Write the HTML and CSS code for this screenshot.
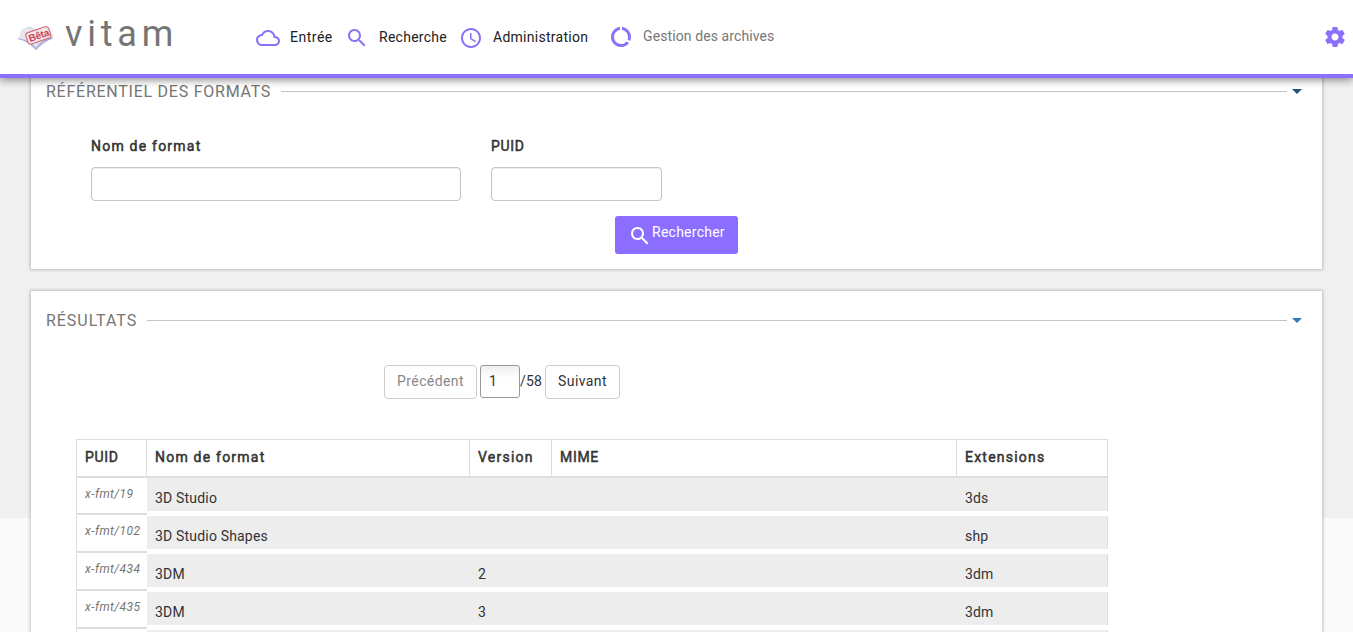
FILE: index.html
```
<!DOCTYPE html>
<html lang="fr">
<head>
<meta charset="utf-8">
<title>Vitam</title>
<link rel="stylesheet" href="styles.css">
</head>
<body>
<header class="topbar">
  <div class="brand">
    <svg class="logo" width="36" height="26" viewBox="0 0 36 26">
      <path d="M1 12 4 4 12 1 18 5 31 2 35 12 18 25z" fill="#dfdff0"/>
      <path d="M4 4Q13 0 17 12L18 24Q13 15 1 13z" fill="#e6e6ec"/>
      <path d="M0 13Q13 16 18 23 23 15 35 12L34 14Q25 16 18 25 12 17 0 14z" fill="#a5a7dd"/>
      <g transform="rotate(-19 20 11)">
        <rect x="8.500" y="4.500" width="24" height="12" rx="3" fill="#f5e7ee" stroke="#d4707a" stroke-width="1.200"/>
        <text class="logo-text" x="10.500" y="14">Bêta</text>
      </g>
    </svg>
    <span class="brand-name">vitam</span>
  </div>
  <nav class="menu">
    <a class="item entry"><svg width="24" height="24" viewBox="0 0 24 24"><path d="M19.350 10.040C18.670 6.590 15.640 4 12 4 9.110 4 6.600 5.640 5.350 8.040 2.340 8.360 0 10.910 0 14c0 3.310 2.690 6 6 6h13c2.760 0 5-2.240 5-5 0-2.640-2.050-4.780-4.650-4.960zM19 18H6c-2.210 0-4-1.790-4-4s1.790-4 4-4h.710C7.370 7.690 9.480 6 12 6c3.040 0 5.500 2.460 5.500 5.500v.5H19c1.660 0 3 1.340 3 3s-1.340 3-3 3z"/></svg><span>Entrée</span></a>
    <a class="item search"><svg width="24" height="24" viewBox="0 0 24 24"><path d="M15.500 14h-.79l-.28-.27C15.410 12.590 16 11.110 16 9.500 16 5.910 13.090 3 9.500 3S3 5.910 3 9.500 5.910 16 9.500 16c1.610 0 3.090-.59 4.230-1.570l.27.28v.79l5 4.990L20.490 19l-4.990-5zm-6 0C7.010 14 5 11.990 5 9.500S7.010 5 9.500 5 14 7.010 14 9.500 11.990 14 9.500 14z"/></svg><span>Recherche</span></a>
    <a class="item admin"><svg width="24" height="24" viewBox="0 0 24 24"><path d="M11.990 2C6.470 2 2 6.480 2 12s4.470 10 9.990 10C17.520 22 22 17.520 22 12S17.520 2 11.990 2zM12 20c-4.420 0-8-3.580-8-8s3.580-8 8-8 8 3.580 8 8-3.580 8-8 8zM11 7h1.500v5.250l4.500 2.670-.75 1.230L11 13z"/></svg><span>Administration</span></a>
    <a class="item archives"><svg width="24" height="24" viewBox="0 0 24 24"><path d="M13 2.050v3.030c3.390.49 6 3.390 6 6.920 0 .9-.18 1.750-.48 2.540l2.600 1.530c.56-1.240.88-2.620.88-4.070 0-5.180-3.950-9.450-9-9.950zM12 19c-3.870 0-7-3.130-7-7 0-3.530 2.610-6.430 6-6.920V2.050c-5.060.5-9 4.760-9 9.950 0 5.520 4.470 10 9.990 10 3.310 0 6.240-1.610 8.060-4.090l-2.600-1.530C16.170 17.980 14.210 19 12 19z"/></svg><span>Gestion des archives</span></a>
  </nav>
  <svg class="settings" width="24" height="24" viewBox="0 0 24 24"><path d="M19.430 12.980c.04-.32.070-.64.070-.98s-.03-.66-.07-.98l2.110-1.650c.19-.15.240-.42.120-.64l-2-3.460c-.12-.22-.39-.3-.61-.22l-2.490 1c-.52-.4-1.080-.73-1.690-.98l-.38-2.650C14.460 2.180 14.250 2 14 2h-4c-.25 0-.46.180-.49.420l-.38 2.650c-.61.250-1.170.59-1.690.98l-2.490-1c-.23-.09-.49 0-.61.220l-2 3.460c-.13.220-.07.490.120.640l2.110 1.650c-.04.320-.07.650-.07.980s.030.660.070.980l-2.110 1.650c-.19.150-.24.420-.12.640l2 3.460c.120.220.390.300.610.220l2.490-1c.520.400 1.080.730 1.690.980l.380 2.650c.030.240.240.420.490.420h4c.250 0 .460-.18.490-.42l.380-2.650c.610-.25 1.170-.59 1.690-.98l2.490 1c.230.090.490 0 .610-.22l2-3.460c.120-.22.070-.49-.12-.64l-2.110-1.650zM12 15.500c-1.930 0-3.500-1.570-3.500-3.500s1.570-3.500 3.500-3.500 3.500 1.570 3.500 3.500-1.570 3.500-3.500 3.500z"/></svg>
</header>
<main class="content">
  <section class="panel filters">
    <div class="panel-head"><h2>RÉFÉRENTIEL DES FORMATS</h2><i class="rule"></i><i class="caret dark"></i></div>
    <form class="fields">
      <label class="field name"><span class="strong wide">Nom de format</span><input type="text"></label>
      <label class="field puid"><span class="strong">PUID</span><input type="text"></label>
    </form>
    <button class="submit" type="button"><svg width="24" height="24" viewBox="0 0 24 24"><path d="M15.500 14h-.79l-.28-.27C15.410 12.590 16 11.110 16 9.500 16 5.910 13.090 3 9.500 3S3 5.910 3 9.500 5.910 16 9.500 16c1.610 0 3.090-.59 4.230-1.570l.27.28v.79l5 4.990L20.490 19l-4.990-5zm-6 0C7.010 14 5 11.990 5 9.500S7.010 5 9.500 5 14 7.010 14 9.500 11.990 14 9.500 14z"/></svg><span>Rechercher</span></button>
  </section>
  <section class="panel results">
    <div class="panel-head"><h2>RÉSULTATS</h2><i class="rule"></i><i class="caret"></i></div>
    <div class="pager">
      <button class="page-btn prev" type="button" disabled>Précédent</button>
      <input class="page-input" type="text" value="1"><span class="total">/58</span>
      <button class="page-btn next" type="button">Suivant</button>
    </div>
    <div class="table">
      <div class="row head"><div class="strong">PUID</div><div class="strong wide">Nom de format</div><div class="strong wide">Version</div><div class="strong">MIME</div><div class="strong wide">Extensions</div></div>
      <div class="row first"><div class="id">x-fmt/19</div><div>3D Studio</div><div></div><div></div><div>3ds</div></div>
      <div class="row"><div class="id">x-fmt/102</div><div>3D Studio Shapes</div><div></div><div></div><div>shp</div></div>
      <div class="row"><div class="id">x-fmt/434</div><div>3DM</div><div>2</div><div></div><div>3dm</div></div>
      <div class="row"><div class="id">x-fmt/435</div><div>3DM</div><div>3</div><div></div><div>3dm</div></div>
      <div class="row cut"><div class="id"></div><div></div><div></div><div></div><div></div></div>
    </div>
  </section>
</main>
</body>
</html>
```
FILE: styles.css
```
* { box-sizing: border-box; }
body {
  margin: 0;
  height: 632px;
  overflow: hidden;
  background: linear-gradient(#f0f0f0 518px, #fafafa 518px);
  font: 14px/20px Roboto, sans-serif;
  letter-spacing: .18px;
  color: #333;
}
.topbar {
  position: relative;
  z-index: 1;
  display: flex;
  height: 78px;
  background: #fff;
  border-bottom: 4px solid #8b70fb;
  box-shadow: 0 2px 8px rgba(0, 0, 0, .45);
}
.topbar svg { fill: #8b70fb; flex: none; }
.brand { display: flex; width: 256px; padding-left: 18px; }
.brand .logo { margin-top: 25px; }
.topbar .logo-text {
  font: bold 10px "Liberation Sans", sans-serif;
  letter-spacing: -.2px;
  fill: #c74450;
}
.brand-name {
  margin: 12px 0 0 11px;
  font-size: 36px;
  line-height: 44px;
  letter-spacing: 4.800px;
  color: #757575;
}
.menu { display: flex; flex: 1; padding-top: 25px; }
.item { display: flex; color: #212121; white-space: nowrap; }
.item span { margin-top: 2px; letter-spacing: .27px; }
.item svg { margin-top: 1px; }
.entry { width: 89px; }
.item.entry span { margin-left: 10px; letter-spacing: .5px; }
.search { width: 114px; }
.search span { margin-left: 10px; }
.admin { width: 150px; }
.admin span { margin-left: 10px; }
.archives { color: #777; }
.archives svg { margin-top: 0; }
.item.archives span { margin: 1px 0 0 10px; letter-spacing: .1px; }
.settings { margin: 25px 6px 0 0; }

.content { padding: 0 31px; }
.panel {
  background: #fff;
  box-shadow: 0 0 3px 1px rgba(0, 0, 0, .22);
  padding: 0 15px;
}
.filters { height: 191px; }
.results { height: 341px; margin-top: 22px; padding-top: 16px; }
.panel-head { display: flex; align-items: center; height: 27px; padding-right: 5px; }
h2 {
  margin: 0 10px 0 0;
  font-size: 16px;
  font-weight: 400;
  letter-spacing: .75px;
  color: #757575;
}
.results h2 { letter-spacing: .95px; }
.rule { flex: 1; height: 1px; background: #c4c4c4; margin-right: 5px; }
.caret {
  border: 5px solid transparent;
  border-top-color: #337ab7;
  border-bottom: 0;
}
.caret.dark { border-top-color: #23527c; }
.strong { -webkit-text-stroke: .5px #333; letter-spacing: .7px; }
.wide { letter-spacing: 1.220px; }
.fields { display: flex; gap: 30px; padding: 31px 0 0 45px; }
.field { display: flex; flex-direction: column; gap: 11px; }
.field input {
  height: 34px;
  border: 1px solid #c4c4c4;
  border-radius: 4px;
  box-shadow: inset 0 1px 1px rgba(0, 0, 0, .075);
}
.name { width: 370px; }
.puid { width: 171px; }
.submit {
  display: flex;
  width: 123px;
  height: 38px;
  margin: 15px auto 0;
  padding: 6px 13px;
  border: 0;
  border-radius: 3px;
  background: #8b6dff;
  color: #fff;
  font: inherit;
  letter-spacing: .25px;
}
.submit svg { fill: #fff; flex: none; margin-top: 2px; }
.pager { display: flex; padding: 31px 0 0 338px; }
.page-btn {
  height: 34px;
  padding: 0 0 2px;
  border: 1px solid #ccc;
  border-radius: 4px;
  background: #fff;
  color: #333;
  font: inherit;
  letter-spacing: .4px;
}
.prev { width: 93px; margin-right: 3px; color: #888; }
.next { width: 75px; margin-left: 3px; }
.page-input {
  width: 40px;
  height: 33px;
  padding: 0 8px 2px;
  border: 1px solid #999;
  border-radius: 3px;
  background: linear-gradient(#eee, #fff 40%);
  color: #333;
  font: inherit;
}
.total { width: 22px; padding-top: 6px; }
.table { width: 1032px; margin: 40px 0 0 30px; }
.row {
  display: grid;
  grid-template-columns: 71px 323px 82px 405px 151px;
  height: 38px;
}
.row > div {
  height: 33px;
  padding: 10px 8px 0;
  background: #ededed;
}
.row > div:last-child { border-right: 1px solid #ddd; }
.row > .id {
  height: 37px;
  padding: 5px 0 0 8px;
  border: solid #ddd;
  border-width: 0 0 2px 1px;
  background: #fff;
  font-size: 12px;
  font-style: italic;
  letter-spacing: .45px;
  color: #757575;
}
.first > .id { padding-top: 6px; }
.row.cut { height: 2px; }
.row.cut > div { height: 2px; padding: 0; border-bottom: 0; }
.head {
  height: 39px;
  border: solid #ddd;
  border-width: 1px 0 2px 1px;
  grid-template-columns: 70px 323px 82px 405px 151px;
}
.head > div, .head > div:last-child {
  height: 36px;
  padding: 7px 8px 0;
  border-right: 1px solid #ddd;
  background: #fff;
}
```
